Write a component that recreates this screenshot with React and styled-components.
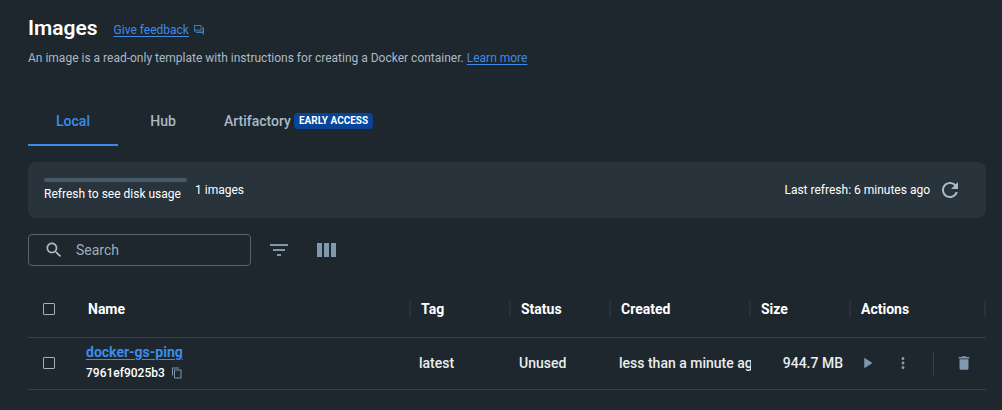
import React from "react";
import styled, { createGlobalStyle } from "styled-components";

const GlobalStyle = createGlobalStyle`
  *, *::before, *::after { box-sizing: border-box; }
  body {
    margin: 0;
    background: #1d272d;
    color: #fff;
    font-family: Roboto, "Liberation Sans", sans-serif;
    font-size: 14px;
    line-height: 20px;
  }
  button, input { font: inherit; }
`;

const Page = styled.main`
  padding: 16px 16px 20px 28px;
`;

const TitleRow = styled.header`
  display: flex;
  align-items: center;
  gap: 16px;
`;

const Title = styled.h1`
  margin: 0;
  font-size: 21px;
  line-height: 24px;
  font-weight: 600;
`;

const Link = styled.a`
  color: #3c8be8;
  font-size: ${(p) => (p.$strong ? "14px" : "12px")};
  font-weight: ${(p) => (p.$strong ? 700 : 400)};
  text-decoration: underline;
  text-underline-offset: 2px;
`;

const Feedback = styled.div`
  display: flex;
  align-items: center;
  gap: 4px;
  padding-top: 4px;
  color: #3d7cb5;
`;

const Intro = styled.p`
  margin: 8px 0 0;
  color: #acb9c6;
  font-size: 12px;
  line-height: 20px;
`;

const Tabs = styled.div`
  display: flex;
  margin-top: 30px;
`;

const Tab = styled.button`
  display: flex;
  align-items: center;
  justify-content: center;
  gap: 3px;
  min-width: 90px;
  height: 48px;
  padding: 0 16px;
  border: 0;
  border-bottom: 2px solid ${(p) => (p.$active ? "#3c8be8" : "transparent")};
  background: none;
  color: ${(p) => (p.$active ? "#3c8be8" : "#acb9c6")};
  font-weight: 500;
`;

const Badge = styled.span`
  padding: 0 5px;
  border-radius: 4px;
  background: #06459a;
  color: #fff;
  font-size: 10px;
  line-height: 16px;
  font-weight: 700;
`;

const UsagePanel = styled.section`
  display: flex;
  align-items: center;
  gap: 8px;
  height: 56px;
  margin-top: 16px;
  padding: 0 24px 0 16px;
  border-radius: 8px;
  background: #28333b;
  font-size: 12px;
  line-height: 16px;
`;

const DiskUsage = styled.div`
  min-width: 143px;
  &::before {
    content: "";
    display: block;
    height: 4px;
    margin-bottom: 4px;
    border-radius: 2px;
    background: #465a69;
  }
`;

const LastRefresh = styled.div`
  display: flex;
  align-items: center;
  gap: 8px;
  margin-left: auto;
`;

const IconButton = styled.button`
  display: flex;
  align-items: center;
  justify-content: center;
  flex: none;
  padding: 0;
  border: 0;
  background: none;
  color: ${(p) => p.$color || "#7f98ae"};
`;

const Toolbar = styled.div`
  display: flex;
  align-items: center;
  gap: 16px;
  margin-top: 16px;
`;

const ToolbarButtons = styled.div`
  display: flex;
  gap: 24px;
`;

const SearchBox = styled.label`
  display: flex;
  align-items: center;
  gap: 12px;
  width: 223px;
  height: 32px;
  padding: 0 15px;
  border: 1px solid #566472;
  border-radius: 4px;
  color: #acb9c6;
`;

const SearchInput = styled.input`
  flex: 1;
  min-width: 0;
  padding: 0;
  border: 0;
  outline: 0;
  background: none;
  color: #fff;
  &::placeholder { color: #a0adba; opacity: 1; }
`;

const Table = styled.table`
  width: 100%;
  margin-top: 15px;
  border-collapse: collapse;
  table-layout: fixed;
`;

const Shell = styled.tr`
  height: ${(p) => (p.$head ? "56px" : "52px")};
  border-bottom: 1px solid #35414b;
`;

const Col = styled.col`
  width: ${(p) => p.$width};
`;

const HeadCell = styled.th`
  padding: 0;
  text-align: left;
  font-weight: 700;
`;

const HeadLabel = styled.div`
  display: flex;
  align-items: center;
  height: 16px;
  padding-left: 10px;
  border-right: 2px solid #27323b;
`;

const Cell = styled.td`
  padding: 0 ${(p) => (p.$right ? "8px" : "0")} 0 8px;
  overflow: hidden;
  white-space: nowrap;
  text-align: ${(p) => (p.$right ? "right" : "left")};
  font-weight: 500;
  color: #e9edf0;
`;

const CheckCell = styled.td`
  padding: 0 0 0 15px;
`;

const Checkbox = styled.input`
  appearance: none;
  display: block;
  width: 12px;
  height: 12px;
  margin: 0;
  border: 1px solid #9fb0bf;
  border-radius: 1px;
  &:checked { background: #3c8be8; }
`;

const ImageId = styled.div`
  display: flex;
  align-items: center;
  gap: 6px;
  color: #fff;
  font-size: 12px;
  line-height: 22px;
`;

const Actions = styled.div`
  display: flex;
  align-items: center;
  gap: 17px;
`;

const Divider = styled.span`
  width: 1px;
  height: 24px;
  margin: 0 4px;
  background: #35414b;
`;

const paths = {
  forum:
    "M15 4v7H5.17L4 12.17V4h11m1-2H3c-.55 0-1 .45-1 1v14l4-4h10c.55 0 1-.45 1-1V3c0-.55-.45-1-1-1zm5 4h-2v9H6v2c0 .55.45 1 1 1h11l4 4V7c0-.55-.45-1-1-1z",
  refresh:
    "M17.65 6.35C16.2 4.9 14.21 4 12 4c-4.42 0-7.99 3.58-7.99 8s3.57 8 7.99 8c3.73 0 6.84-2.55 7.73-6h-2.08c-.82 2.33-3.04 4-5.65 4-3.31 0-6-2.69-6-6s2.69-6 6-6c1.66 0 3.14.69 4.22 1.78L13 11h7V4l-2.35 2.35z",
  search:
    "M15.5 14h-.79l-.28-.27C15.41 12.59 16 11.11 16 9.5 16 5.91 13.09 3 9.5 3S3 5.91 3 9.5 5.91 16 9.5 16c1.61 0 3.09-.59 4.23-1.57l.27.28v.79l5 4.99L20.49 19l-4.99-5zm-6 0C7.01 14 5 11.99 5 9.5S7.01 5 9.5 5 14 7.01 14 9.5 11.99 14 9.5 14z",
  filter: "M10 18h4v-2h-4v2zM3 6v2h18V6H3zm3 7h12v-2H6v2z",
  columns: "M2 5h5v14H2zM9 5h5v14H9zM16 5h5v14h-5z",
  copy: "M16 1H4c-1.1 0-2 .9-2 2v14h2V3h12V1zm3 4H8c-1.1 0-2 .9-2 2v14c0 1.1.9 2 2 2h11c1.1 0 2-.9 2-2V7c0-1.1-.9-2-2-2zm0 16H8V7h11v14z",
  play: "M7 5v14l11-7z",
  more: "M12 8c1.1 0 2-.9 2-2s-.9-2-2-2-2 .9-2 2 .9 2 2 2zm0 2c-1.1 0-2 .9-2 2s.9 2 2 2 2-.9 2-2-.9-2-2-2zm0 6c-1.1 0-2 .9-2 2s.9 2 2 2 2-.9 2-2-.9-2-2-2z",
  trash: "M6 19c0 1.1.9 2 2 2h8c1.1 0 2-.9 2-2V7H6v12zM19 4h-3.5l-1-1h-5l-1 1H5v2h14V4z",
};

const Icon = ({ name, size }) => (
  <svg width={size} height={size} viewBox="0 0 24 24" fill="currentColor" aria-hidden="true">
    <path d={paths[name]} />
  </svg>
);

const columns = ["Name", "Tag", "Status", "Created", "Size", "Actions"];

const images = [
  {
    name: "docker-gs-ping",
    id: "7961ef9025b3",
    tag: "latest",
    status: "Unused",
    created: "less than a minute ago",
    size: "944.7 MB",
  },
];

export default function App() {
  return (
    <>
      <GlobalStyle />
      <Page>
        <TitleRow>
          <Title>Images</Title>
          <Feedback>
            <Link href="#feedback">Give feedback</Link>
            <Icon name="forum" size={12} />
          </Feedback>
        </TitleRow>
        <Intro>
          An image is a read-only template with instructions for creating a Docker container.{" "}
          <Link href="#learn">Learn more</Link>
        </Intro>

        <Tabs role="tablist">
          <Tab role="tab" aria-selected="true" $active>Local</Tab>
          <Tab role="tab" aria-selected="false">Hub</Tab>
          <Tab role="tab" aria-selected="false">
            Artifactory <Badge>EARLY ACCESS</Badge>
          </Tab>
        </Tabs>

        <UsagePanel>
          <DiskUsage>Refresh to see disk usage</DiskUsage>
          <span>1 images</span>
          <LastRefresh>
            Last refresh: 6 minutes ago
            <IconButton aria-label="Refresh" $color="#acb9c6">
              <Icon name="refresh" size={24} />
            </IconButton>
          </LastRefresh>
        </UsagePanel>

        <Toolbar>
          <SearchBox>
            <Icon name="search" size={20} />
            <SearchInput type="text" placeholder="Search" aria-label="Search" />
          </SearchBox>
          <ToolbarButtons>
            <IconButton aria-label="Filter"><Icon name="filter" size={24} /></IconButton>
            <IconButton aria-label="Columns"><Icon name="columns" size={24} /></IconButton>
          </ToolbarButtons>
        </Toolbar>

        <Table>
          <colgroup>
            <Col $width="50px" />
            <Col />
            <Col $width="100px" />
            <Col $width="100px" />
            <Col $width="140px" />
            <Col $width="100px" />
            <Col $width="135px" />
          </colgroup>
          <thead>
            <Shell $head>
              <CheckCell><Checkbox type="checkbox" aria-label="Select all images" /></CheckCell>
              {columns.map((c) => (
                <HeadCell key={c} scope="col"><HeadLabel>{c}</HeadLabel></HeadCell>
              ))}
            </Shell>
          </thead>
          <tbody>
            {images.map((img) => (
              <Shell key={img.id}>
                <CheckCell><Checkbox type="checkbox" aria-label={`Select ${img.name}`} /></CheckCell>
                <Cell>
                  <Link href="#image" $strong>{img.name}</Link>
                  <ImageId>
                    {img.id}
                    <IconButton aria-label="Copy ID"><Icon name="copy" size={12} /></IconButton>
                  </ImageId>
                </Cell>
                <Cell>{img.tag}</Cell>
                <Cell>{img.status}</Cell>
                <Cell>{img.created}</Cell>
                <Cell $right>{img.size}</Cell>
                <Cell>
                  <Actions>
                    <IconButton aria-label="Run"><Icon name="play" size={18} /></IconButton>
                    <IconButton aria-label="More actions"><Icon name="more" size={18} /></IconButton>
                    <Divider />
                    <IconButton aria-label="Delete"><Icon name="trash" size={18} /></IconButton>
                  </Actions>
                </Cell>
              </Shell>
            ))}
          </tbody>
        </Table>
      </Page>
    </>
  );
}
